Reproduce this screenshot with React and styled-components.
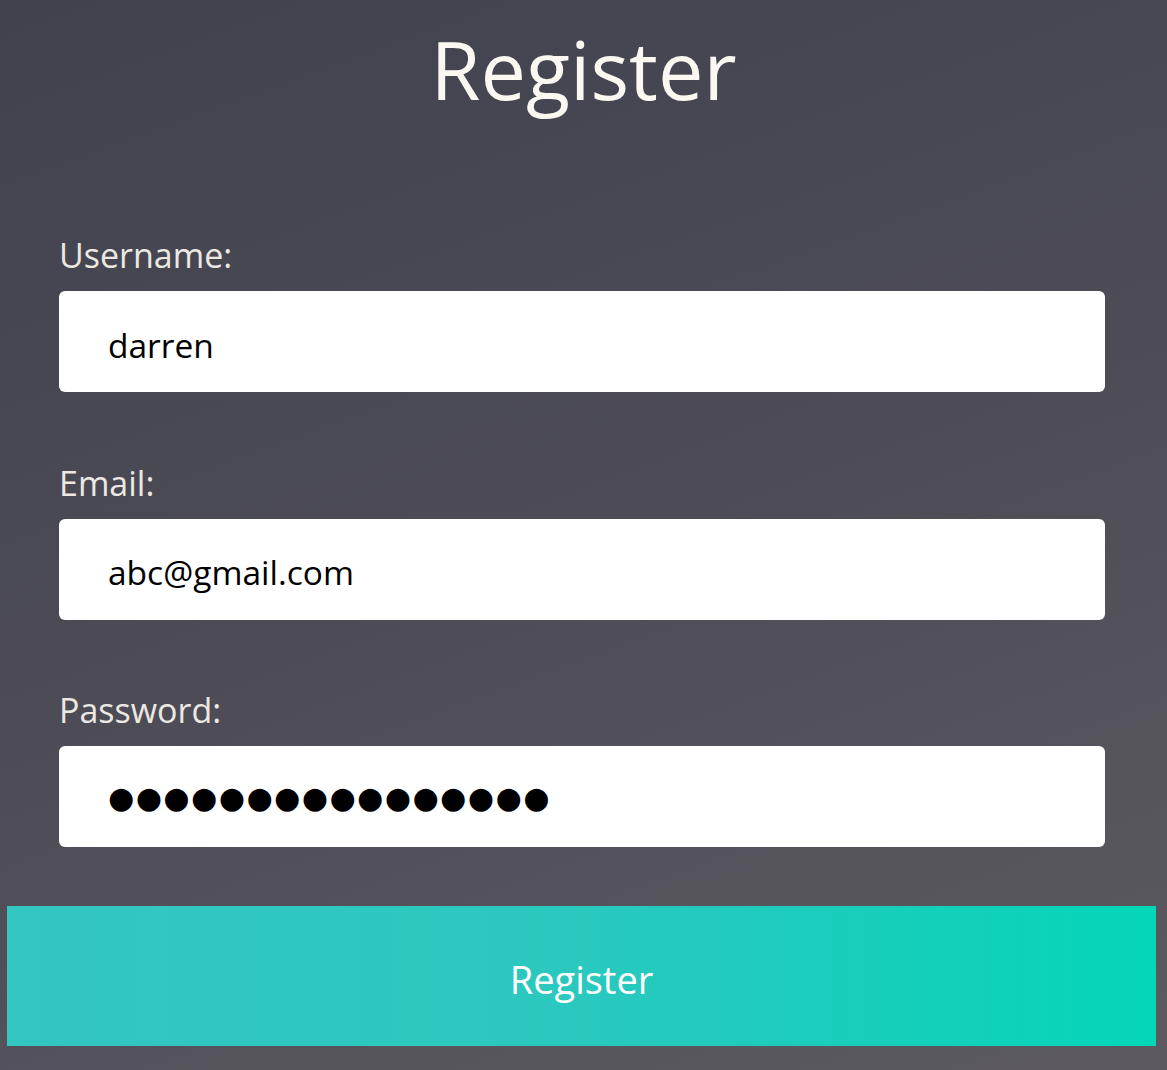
import React from 'react';
import styled, { createGlobalStyle } from 'styled-components';

const GlobalStyle = createGlobalStyle`
  html, body {
    margin: 0;
    padding: 0;
  }
  body {
    font-family: "Open Sans", "Liberation Sans", sans-serif;
  }
`;

const fields = [
  { label: 'Username:', value: 'darren' },
  { label: 'Email:', value: 'abc@gmail.com' },
  { label: 'Password:', value: '●'.repeat(16), secret: true },
];

const App = () => (
  <Page>
    <GlobalStyle />
    <Title>Register</Title>
    <Form onSubmit={(e) => e.preventDefault()}>
      {fields.map((f) => (
        <Field key={f.label}>
          <Label>{f.label}</Label>
          <Input type={'text'} defaultValue={f.value} $secret={f.secret} readOnly />
        </Field>
      ))}
      <Submit type={'submit'}>Register</Submit>
    </Form>
  </Page>
);

const Page = styled.div`
  width: 1167px;
  height: 1070px;
  overflow: hidden;
  background: linear-gradient(160deg, #40424e 0%, #4d4c56 50%, #5c5a60 100%);
  color: #fff;
  box-sizing: border-box;
`;

const Title = styled.h1`
  margin: 0;
  padding-top: 19px;
  font-size: 81px;
  font-weight: 400;
  line-height: 100px;
  text-align: center;
  color: #fbf8f2;
`;

const Form = styled.form`
  display: flex;
  flex-direction: column;
  padding-top: 118px;
`;

const Field = styled.div`
  display: flex;
  flex-direction: column;
  padding: 0 62px 0 59px;
  margin-bottom: 72.5px;

  &:last-of-type {
    margin-bottom: 59px;
  }
`;

const Label = styled.label`
  font-size: 34px;
  line-height: 36px;
  color: #ece8e2;
  margin-bottom: 18px;
`;

const Input = styled.input`
  box-sizing: border-box;
  height: 101px;
  width: 100%;
  border: none;
  border-radius: 6px;
  background: #fff;
  padding: ${(p) => (p.$secret ? '2px 0 0 49px' : '6px 0 0 49px')};
  font-family: ${(p) => (p.$secret ? '"DejaVu Sans", sans-serif' : '"Open Sans", "Liberation Sans", sans-serif')};
  font-size: ${(p) => (p.$secret ? '30px' : '33.5px')};
  letter-spacing: ${(p) => (p.$secret ? '1.5px' : '0')};
  color: #000;
  outline: none;
`;

const Submit = styled.button`
  margin: 0 11px 0 7px;
  height: 140px;
  border: none;
  background: linear-gradient(90deg, #34c6c1 0%, #2cc8bf 45%, #1fcbbd 65%, #04d6b8 100%);
  color: #fff;
  font-family: "Open Sans", "Liberation Sans", sans-serif;
  font-size: 38px;
  padding-top: 6px;
  cursor: pointer;
`;

export default App;
